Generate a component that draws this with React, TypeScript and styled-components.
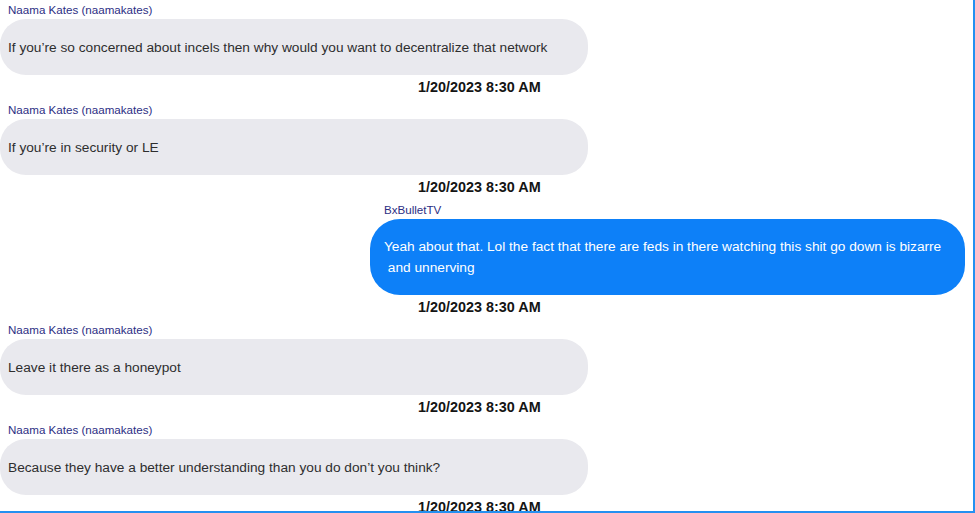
import React from "react";
import styled, { createGlobalStyle } from "styled-components";

const Global = createGlobalStyle`
  html, body { margin: 0; padding: 0; background: #ffffff; }
  body { font-family: "Liberation Sans", Arial, sans-serif; }
`;

const Frame = styled.div`
  width: 975px;
  height: 513px;
  box-sizing: border-box;
  border-right: 2px solid #2490f0;
  border-bottom: 2px solid #2490f0;
  overflow: hidden;
  background: #ffffff;
  display: flex;
  flex-direction: column;
`;

const Message = styled.div<{ $mine?: boolean }>`
  display: flex;
  flex-direction: column;
  align-items: flex-start;
  padding-left: ${(p) => (p.$mine ? "370px" : "0")};
`;

const Sender = styled.div<{ $mine?: boolean }>`
  height: 19px;
  line-height: 19px;
  font-size: 11.6px;
  color: #2c2e84;
  padding-left: ${(p) => (p.$mine ? "14px" : "8px")};
  white-space: nowrap;
`;

const Bubble = styled.div<{ $mine?: boolean }>`
  box-sizing: border-box;
  width: ${(p) => (p.$mine ? "595px" : "588px")};
  height: ${(p) => (p.$mine ? "76px" : "56px")};
  border-radius: ${(p) => (p.$mine ? "30px" : "26px")};
  background: ${(p) => (p.$mine ? "#0d80f8" : "#e9e9ee")};
  color: ${(p) => (p.$mine ? "#ffffff" : "#2e2e2e")};
  padding-left: ${(p) => (p.$mine ? "14px" : "8px")};
  font-size: 13.7px;
  line-height: 21px;
  display: flex;
  align-items: center;
  white-space: pre-wrap;
`;

const Stamp = styled.div<{ $mine?: boolean }>`
  height: 25px;
  line-height: 24px;
  padding-left: 418px;
  margin-left: ${(p) => (p.$mine ? "-370px" : "0")};
  font-size: 14.4px;
  font-weight: bold;
  color: #141414;
  white-space: nowrap;
`;

type Msg = { sender: string; text: string; mine?: boolean; time: string };

const messages: Msg[] = [
  {
    sender: "Naama Kates (naamakates)",
    text: "If you\u2019re so concerned about incels then why would you want to decentralize that network",
    time: "1/20/2023 8:30 AM",
  },
  {
    sender: "Naama Kates (naamakates)",
    text: "If you\u2019re in security or LE",
    time: "1/20/2023 8:30 AM",
  },
  {
    sender: "BxBulletTV",
    text: "Yeah about that. Lol the fact that there are feds in there watching this shit go down is bizarre\n and unnerving",
    mine: true,
    time: "1/20/2023 8:30 AM",
  },
  {
    sender: "Naama Kates (naamakates)",
    text: "Leave it there as a honeypot",
    time: "1/20/2023 8:30 AM",
  },
  {
    sender: "Naama Kates (naamakates)",
    text: "Because they have a better understanding than you do don\u2019t you think?",
    time: "1/20/2023 8:30 AM",
  },
];

export default function App() {
  return (
    <>
      <Global />
      <Frame>
        {messages.map((m, i) => (
          <Message key={i} $mine={m.mine}>
            <Sender $mine={m.mine}>{m.sender}</Sender>
            <Bubble $mine={m.mine}>{m.text}</Bubble>
            <Stamp $mine={m.mine}>{m.time}</Stamp>
          </Message>
        ))}
      </Frame>
    </>
  );
}
